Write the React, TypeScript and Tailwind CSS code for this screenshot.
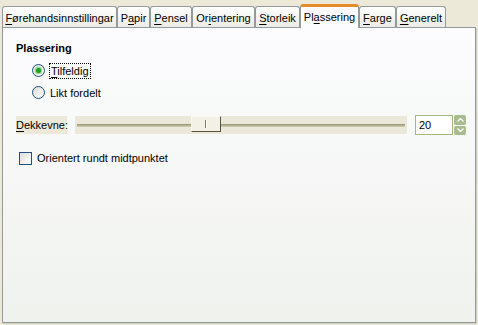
import React from "react";

const U = ({ children }: { children: React.ReactNode }) => <span className="underline underline-offset-[2px]">{children}</span>;

function Tab({ label, active, width }: { label: React.ReactNode; active?: boolean; width: number }) {
  if (active) {
    return (
      <div
        className="relative z-10 -mb-px flex h-[24px] items-start justify-center whitespace-nowrap rounded-t-[3px] border-x border-t-[3px] border-x-[#919b9c] border-t-[#e68b2c] bg-[#fcfcfe] pt-[2px]"
        style={{ width }}
      >
        {label}
      </div>
    );
  }
  return (
    <div
      className="flex h-[21px] items-start justify-center whitespace-nowrap rounded-t-[3px] border-x border-t border-[#919b9c] bg-gradient-to-b from-[#ffffff] to-[#ecebe5] pt-[3px]"
      style={{ width }}
    >
      {label}
    </div>
  );
}

function Radio({ checked }: { checked?: boolean }) {
  return (
    <div className="flex h-[13px] w-[13px] items-center justify-center rounded-full border border-[#1c5180] bg-gradient-to-br from-[#dcdcd7] to-[#ffffff]">
      {checked && <div className="h-[5px] w-[5px] rounded-full bg-[#21a121] shadow-[0_0_1px_1px_#7fd07f]" />}
    </div>
  );
}

export default function App() {
  return (
    <div
      className="flex h-[325px] w-[478px] flex-col bg-[#ece9d8] text-[11px] text-black"
      style={{ fontFamily: "'Liberation Sans', Arial, sans-serif" }}
    >
      <div className="flex h-[27px] items-end pl-[2px]">
        <Tab width={115} label={<span><U>F</U>ørehandsinnstillingar</span>} />
        <Tab width={33} label={<span>P<U>a</U>pir</span>} />
        <Tab width={42} label={<span><U>P</U>ensel</span>} />
        <Tab width={63} label={<span>Or<U>i</U>entering</span>} />
        <Tab width={45} label={<span><U>S</U>torleik</span>} />
        <Tab active width={59} label={<span>Pl<U>a</U>ssering</span>} />
        <Tab width={37} label={<span><U>F</U>arge</span>} />
        <Tab width={50} label={<span><U>G</U>enerelt</span>} />
      </div>
      <div className="mx-[2px] mb-[2px] flex flex-1 flex-col border border-[#919b9c] bg-gradient-to-b from-[#fcfcfe] to-[#f0f2ee] pl-[13px] shadow-[1px_1px_0_#d0d0bf] ">
        <div className="mt-[14px] h-[13px] font-bold leading-[13px]">Plassering</div>
        <div className="mt-[7px] flex h-[17px] items-center pl-[16px]">
          <Radio checked />
          <span className="ml-[4px] border border-dotted border-black px-[1px] leading-[14px]"><U>T</U>ilfeldig</span>
        </div>
        <div className="mt-[5px] flex h-[17px] items-center pl-[16px]">
          <Radio />
          <span className="ml-[5px] leading-[14px]">Likt fordelt</span>
        </div>
        <div className="mt-[14px] flex h-[20px] items-center">
          <span className="flex h-[18px] w-[51px] items-center bg-[#ece9d8] leading-[14px]"><U>D</U>ekkevne:</span>
          <div className="relative ml-[8px] flex h-[18px] w-[332px] items-center bg-[#ebe8d9]">
            <div className="mx-[2px] h-[3px] flex-1 border-t border-b border-t-[#9d9a7c] border-b-[#c8c5a9] bg-[#b8b594]" />
            <div className="absolute left-[116px] top-[0px] flex h-[16px] w-[30px] items-center justify-center border border-b-[#55533f] border-l-[#fafaf4] border-r-[#55533f] border-t-[#fafaf4] bg-[#f3f1e6]">
              <div className="h-[8px] w-[2px] border-l border-l-[#7d7a64] bg-white" />
            </div>
          </div>
          <div className="ml-[8px] flex h-[20px] w-[38px] items-center border border-[#a5b97e] bg-white pl-[3px] leading-[14px]">20</div>
          <div className="ml-[1px] flex h-[20px] w-[12px] flex-col gap-[1px]">
            <div className="flex flex-1 items-center justify-center rounded-[2px] bg-[#a8bc8e]">
              <svg width="7" height="4" viewBox="0 0 7 4"><path d="M0.5 3.5 L3.5 0.5 L6.5 3.5" stroke="white" strokeWidth="1.3" fill="none" /></svg>
            </div>
            <div className="flex flex-1 items-center justify-center rounded-[2px] bg-[#a8bc8e]">
              <svg width="7" height="4" viewBox="0 0 7 4"><path d="M0.5 0.5 L3.5 3.5 L6.5 0.5" stroke="white" strokeWidth="1.3" fill="none" /></svg>
            </div>
          </div>
        </div>
        <div className="mt-[16px] flex h-[14px] items-center pl-[3px]">
          <div className="h-[13px] w-[13px] border border-[#1c5180] bg-gradient-to-br from-[#dcdcd7] to-[#ffffff]" />
          <span className="ml-[5px] leading-[14px]">Orientert rundt midtpunktet</span>
        </div>
      </div>
    </div>
  );
}
